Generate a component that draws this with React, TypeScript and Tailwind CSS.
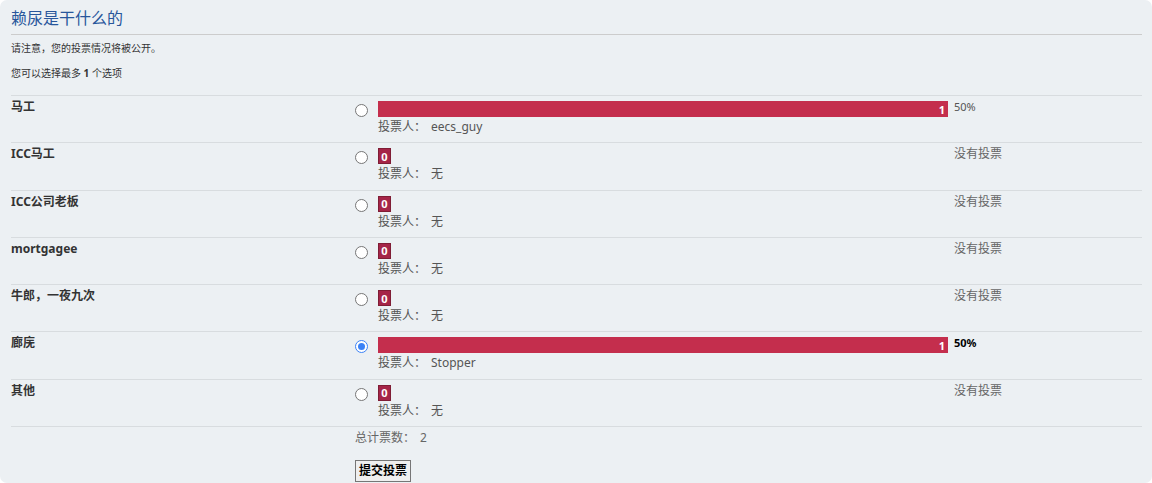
const options = [
  { label: "马工", votes: 1, pct: "50%", voters: "eecs_guy", checked: false },
  { label: "ICC马工", votes: 0, pct: null, voters: "无", checked: false },
  { label: "ICC公司老板", votes: 0, pct: null, voters: "无", checked: false },
  { label: "mortgagee", votes: 0, pct: null, voters: "无", checked: false },
  { label: "牛郎，一夜九次", votes: 0, pct: null, voters: "无", checked: false },
  { label: "廊庑", votes: 1, pct: "50%", voters: "Stopper", checked: true },
  { label: "其他", votes: 0, pct: null, voters: "无", checked: false },
];

function Radio({ checked }: { checked: boolean }) {
  return (
    <span
      className={
        checked
          ? "mt-[8px] flex h-[13px] w-[13px] items-center justify-center rounded-full border border-[#3b82f6] bg-white"
          : "mt-[8px] flex h-[13px] w-[13px] items-center justify-center rounded-full border border-[#767676] bg-white"
      }
    >
      {checked && <span className="h-[7px] w-[7px] rounded-full bg-[#3b82f6]" />}
    </span>
  );
}

export default function App() {
  return (
    <div className="bg-white font-['Noto_Sans','Noto_Sans_CJK_SC',sans-serif]">
      <div className="h-[483px] rounded-[7px] bg-[#ecf0f3] pl-[11px] pr-[10px] pt-[7px]">
        <h2 className="border-b border-[#ccc] pb-[5px] text-[16px] leading-[22px] text-[#28569b]">
          赖尿是干什么的
        </h2>
        <p className="mt-[6px] text-[10px] leading-[14px] text-[#333]">请注意，您的投票情况将被公开。</p>
        <p className="mt-[11px] text-[10px] leading-[14px] text-[#333]">
          您可以选择最多 <span className="font-bold">1</span> 个选项
        </p>

        <div className="mt-[15px]">
          {options.map((o, i) => (
            <div key={i} className="flex h-[47.3px] border-t border-[#d8dcdf]">
              <div className="w-[344px] pt-[3px] text-[12px] font-bold leading-[16px] text-[#333]">{o.label}</div>
              <div className="w-[23px]">
                <Radio checked={o.checked} />
              </div>
              <div className="w-[576px] pt-[5px]">
                {o.votes > 0 ? (
                  <div className="flex h-[16px] w-[570px] items-center justify-end bg-[#c42e4d] pr-[3px] text-[11px] font-bold leading-none text-white">
                    {o.votes}
                  </div>
                ) : (
                  <div className="flex h-[16px] w-[13px] items-center justify-center border border-[#7f1d35] bg-[#a52548] text-[11px] font-bold leading-none text-white">
                    0
                  </div>
                )}
                <div className="mt-[2px] text-[12px] leading-[16px] text-[#555]">
                  投票人：<span className="ml-[5px]">{o.voters}</span>
                </div>
              </div>
              <div className="flex-1 pt-[3px] text-[12px] leading-[16px]">
                {o.pct ? (
                  <span className={o.checked ? "text-[11px] font-bold text-black" : "text-[11px] text-[#555]"}>
                    {o.pct}
                  </span>
                ) : (
                  <span className="text-[#666]">没有投票</span>
                )}
              </div>
            </div>
          ))}
          <div className="border-t border-[#d8dcdf] pl-[344px] pt-[3px]">
            <div className="text-[12px] leading-[16px] text-[#666]">
              总计票数：<span className="ml-[5px]">2</span>
            </div>
            <button className="mt-[14px] h-[22px] border border-[#767676] bg-[#efefef] px-[3px] text-[12px] font-bold leading-none text-black">
              提交投票
            </button>
          </div>
        </div>
      </div>
    </div>
  );
}
